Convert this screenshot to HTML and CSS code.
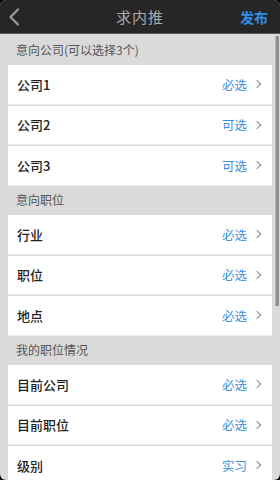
FILE: index.html
```html
<!DOCTYPE html>
<html lang="zh">
<head>
<meta charset="utf-8">
<link rel="stylesheet" href="styles.css">
</head>
<body>
<div class="screen">
  <header class="topbar">
    <span class="back">
      <svg width="12" height="18" viewBox="0 0 12 18"><path d="M10 1.5 L2.5 9 L10 16.5" fill="none" stroke="#9a9a9a" stroke-width="2.2" stroke-linecap="round" stroke-linejoin="round"/></svg>
    </span>
    <span class="title">求内推</span>
    <span class="publish">发布</span>
  </header>
  <div class="content">
    <div class="section first">意向公司(可以选择3个)</div>
    <div class="group">
      <div class="row"><span class="label">公司1</span><span class="value">必选</span><span class="chev"></span></div>
      <div class="row"><span class="label">公司2</span><span class="value">可选</span><span class="chev"></span></div>
      <div class="row"><span class="label">公司3</span><span class="value">可选</span><span class="chev"></span></div>
    </div>
    <div class="section">意向职位</div>
    <div class="group">
      <div class="row"><span class="label">行业</span><span class="value">必选</span><span class="chev"></span></div>
      <div class="row"><span class="label">职位</span><span class="value">必选</span><span class="chev"></span></div>
      <div class="row"><span class="label">地点</span><span class="value">必选</span><span class="chev"></span></div>
    </div>
    <div class="section">我的职位情况</div>
    <div class="group">
      <div class="row"><span class="label">目前公司</span><span class="value">必选</span><span class="chev"></span></div>
      <div class="row"><span class="label">目前职位</span><span class="value">必选</span><span class="chev"></span></div>
      <div class="row"><span class="label">级别</span><span class="value">实习</span><span class="chev"></span></div>
    </div>
    <div class="scrollbar"></div>
  </div>
</div>
</body>
</html>
```
FILE: styles.css
```css
html, body {
  margin: 0;
  padding: 0;
  background: #000;
}
body {
  width: 280px;
  height: 480px;
  overflow: hidden;
  font-family: "Noto Sans CJK SC", "Noto Sans", sans-serif;
}
.screen {
  width: 280px;
  height: 480px;
  border-radius: 6px;
  overflow: hidden;
  background: #dadada;
  display: flex;
  flex-direction: column;
}
.topbar {
  height: 33px;
  flex: none;
  background: #262626;
  border-bottom: 1px solid #5a5a5a;
  display: flex;
  align-items: center;
  padding: 0 12px 0 8px;
}
.back {
  display: flex;
  align-items: center;
  width: 20px;
}
.title {
  flex: 1;
  text-align: center;
  color: #a9a9a9;
  font-size: 15px;
  letter-spacing: 1px;
  margin-left: 12px;
}
.publish {
  color: #2f8fe8;
  font-size: 14px;
  font-weight: bold;
}
.content {
  flex: 1;
  padding: 0 8px;
  position: relative;
}
.section {
  height: 30.5px;
  display: flex;
  align-items: center;
  padding-left: 8px;
  color: #555;
  font-size: 12px;
}
.section.first {
  height: 31px;
}
.group {
  display: flex;
  flex-direction: column;
  gap: 2px;
}
.row {
  height: 38.5px;
  background: #fff;
  display: flex;
  align-items: center;
  padding: 0 10px 0 9px;
  box-shadow: 0 1px 0 #ececec;
}
.label {
  flex: 1;
  color: #222;
  font-size: 13px;
  font-weight: 500;
}
.value {
  color: #3a8fdc;
  font-size: 12.5px;
  margin-right: 7px;
}
.chev {
  width: 5px;
  height: 5px;
  border-top: 1.2px solid #8a8a8a;
  border-right: 1.2px solid #8a8a8a;
  transform: rotate(45deg);
  margin-right: 2px;
}
.scrollbar {
  position: absolute;
  right: 1px;
  top: 2px;
  width: 3px;
  height: 270px;
  background: #8e8e8e;
  border-left: 1px solid #b8b8b8;
}
```
